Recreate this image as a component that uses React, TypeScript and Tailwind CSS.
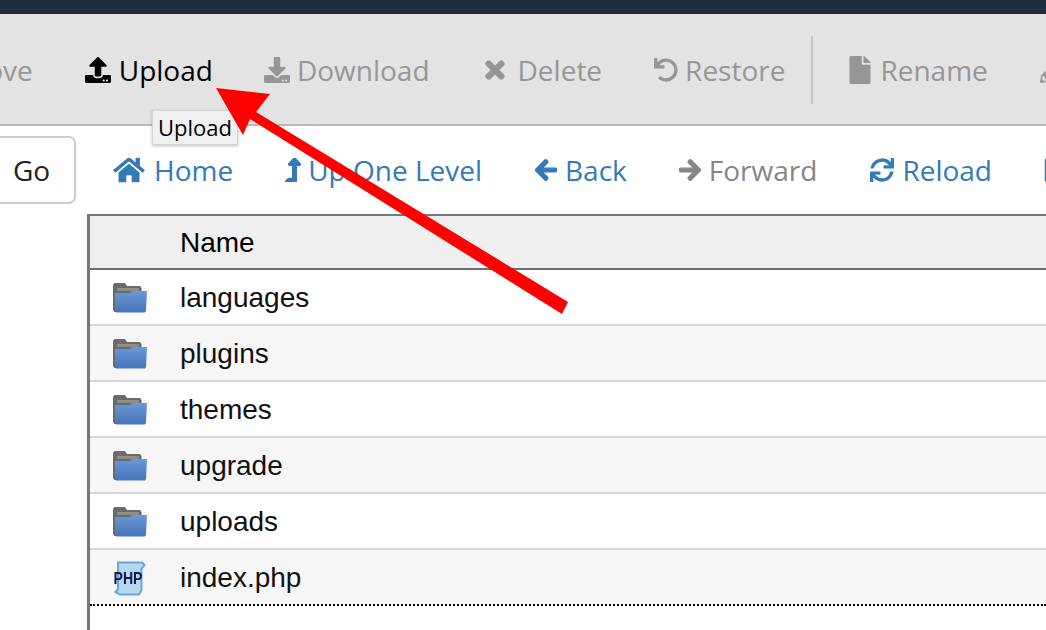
import React from "react";
import {
  FaArrowLeft,
  FaArrowRight,
  FaDownload,
  FaFile,
  FaHome,
  FaLevelUpAlt,
  FaPencilAlt,
  FaRegCheckSquare,
  FaSync,
  FaTimes,
  FaUndo,
  FaUpload,
} from "react-icons/fa";

const files = ["languages", "plugins", "themes", "upgrade", "uploads"];

function FolderIcon() {
  return (
    <svg width="36" height="32" viewBox="0 0 36 32" className="shrink-0 blur-[0.6px]">
      <defs>
        <linearGradient id="folderFront" x1="0" y1="0" x2="0" y2="1">
          <stop offset="0" stopColor="#6c98d6" />
          <stop offset="1" stopColor="#4474ba" />
        </linearGradient>
      </defs>
      <path d="M1 3 2.500 1H13l2 3h13l1.500 2V30H2.500L1 28Z" fill="#6b6b6c" />
      <path d="M5 6h22v3H5Z" fill="#8d8d8d" />
      <path d="M3 11h15l2-2h15l-1 20-1 1.500H4.500L3 29Z" fill="url(#folderFront)" />
    </svg>
  );
}

function PhpIcon() {
  return (
    <svg width="34" height="35" viewBox="0 0 34 35" className="shrink-0 overflow-visible blur-[0.4px]">
      <path d="M6 1.500h24l2.500 2.500-3 4V29l-2.500 4.500H8L3.500 31l2.500-3Z" fill="#b7d6ef" stroke="#6aa5d8" strokeWidth="2" />
      <text x="16" y="23" textAnchor="middle" fontFamily="Liberation Sans, sans-serif" fontWeight="700" fontSize="17" fill="#10184f" textLength="29" lengthAdjust="spacingAndGlyphs">
        PHP
      </text>
    </svg>
  );
}

function ToolItem({ icon, label, color = "text-[#969696]", gap = "gap-[8px]" }: { icon: React.ReactNode; label: string; color?: string; gap?: string }) {
  return (
    <div className={`flex items-center shrink-0 ${gap} ${color}`}>
      {icon}
      <span>{label}</span>
    </div>
  );
}

function NavItem({ icon, label, color = "text-[#337ab7]", gap = "gap-[8px]" }: { icon: React.ReactNode; label: string; color?: string; gap?: string }) {
  return (
    <div className={`flex items-center shrink-0 ${gap} ${color}`}>
      {icon}
      <span>{label}</span>
    </div>
  );
}

function App() {
  return (
    <div className="relative w-[1046px] h-[630px] overflow-hidden bg-white font-['Open_Sans',sans-serif]">
      <div className="h-[14px] bg-[#1f2d3d]" />

      {/* toolbar */}
      <div className="flex items-center h-[112px] pt-[2px] bg-[#e3e3e3] border-b-2 border-[#b9b9b9] text-[28px] whitespace-nowrap">
        <div className="flex items-center gap-[52px] ml-[-39px]">
          <span className="text-[#969696]">Move</span>
          <ToolItem icon={<FaUpload className="w-[26px] h-[26px]" />} label="Upload" color="text-black" />
          <div className="ml-[-1px]">
            <ToolItem icon={<FaDownload className="w-[26px] h-[26px]" />} label="Download" gap="gap-[7px]" />
          </div>
          <div className="ml-[1px]">
            <ToolItem icon={<FaTimes className="w-[24px] h-[26px]" stroke="currentColor" strokeWidth={30} />} label="Delete" gap="gap-[11px]" />
          </div>
          <ToolItem icon={<FaUndo className="w-[24px] h-[24px]" />} label="Restore" gap="gap-[7px]" />
          <div className="w-[2px] h-[68px] bg-[#c4c4c4] ml-[-26px] mr-[-17px]" />
          <ToolItem icon={<FaFile className="w-[24px] h-[28px]" />} label="Rename" />
          <FaPencilAlt className="w-[26px] h-[26px] text-[#969696] shrink-0" />
        </div>
      </div>

      {/* go button and navigation */}
      <div className="flex items-center h-[88px] text-[28px] whitespace-nowrap">
        <div className="flex items-center justify-center shrink-0 w-[100px] h-[68px] ml-[-24px] border-2 border-[#cccccc] rounded-[7px] text-[#222222] pl-[11px]">
          Go
        </div>
        <div className="flex items-center gap-[52px] ml-[36px]">
          <NavItem icon={<FaHome className="w-[34px] h-[28px]" />} label="Home" />
          <NavItem icon={<FaLevelUpAlt className="w-[16px] h-[24px]" stroke="currentColor" strokeWidth={25} />} label="Up One Level" gap="gap-[7px]" />
          <div className="ml-[1px]">
            <NavItem icon={<FaArrowLeft className="w-[22px] h-[24px]" stroke="currentColor" strokeWidth={30} />} label="Back" />
          </div>
          <NavItem icon={<FaArrowRight className="w-[22px] h-[24px]" stroke="currentColor" strokeWidth={30} />} label="Forward" color="text-[#868686]" />
          <div className="ml-[1px]">
            <NavItem icon={<FaSync className="w-[24px] h-[24px]" />} label="Reload" />
          </div>
          <FaRegCheckSquare className="w-[26px] h-[28px] text-[#337ab7] shrink-0" />
        </div>
      </div>

      {/* file table */}
      <div className="ml-[87px] h-[416px] border-l-[3px] border-t-2 border-[#777777] font-['Liberation_Sans',sans-serif] text-[28px] text-[#111111]">
        <div className="flex items-center h-[54px] pt-[2px] pl-[90px] bg-[#efefef] border-b-2 border-[#6f6f6f] text-black">Name</div>
        {files.map((name, i) => (
          <div
            key={name}
            className={`flex items-center h-[56px] pt-[2px] pl-[22px] gap-[32px] border-b-2 border-[#d8d8d8] ${i % 2 === 1 ? "bg-[#f6f6f6]" : "bg-white"}`}
          >
            <FolderIcon />
            <span>{name}</span>
          </div>
        ))}
        <div className="flex items-center h-[56px] pt-[2px] pl-[22px] gap-[34px] bg-[#f6f6f6] border-b-2 border-dotted border-black">
          <PhpIcon />
          <span>index.php</span>
        </div>
      </div>

      {/* tooltip */}
      <div className="absolute left-[152px] top-[110px] w-[86px] h-[35px] flex items-center justify-center bg-[#f1f0f0] border border-[#d4d4d4] shadow-[0_1px_3px_rgba(0,0,0,0.25)] font-['Open_Sans',sans-serif] text-[22px] text-black">
        Upload
      </div>

      {/* annotation arrow */}
      <svg className="absolute left-0 top-0 pointer-events-none" width="1046" height="630" viewBox="0 0 1046 630">
        <path d="M216 88 270 94 256 112 568 302 562 314 250 119 243 135Z" fill="#fe0000" />
      </svg>
    </div>
  );
}

export default App;
